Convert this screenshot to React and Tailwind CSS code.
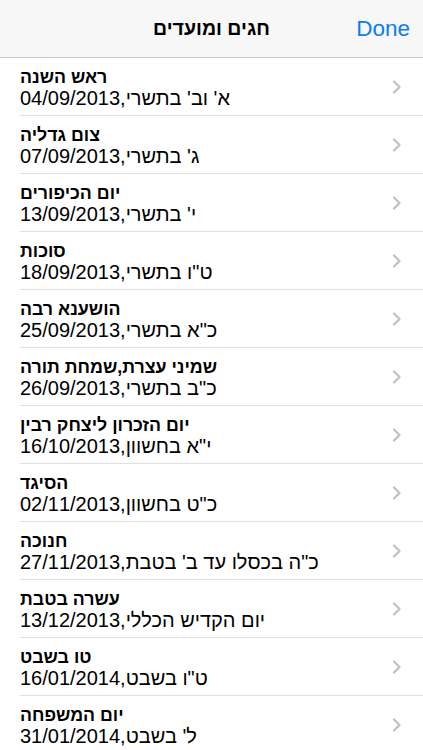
const holidays = [
  { name: "ראש השנה", date: "א' וב' בתשרי,04/09/2013" },
  { name: "צום גדליה", date: "ג' בתשרי,07/09/2013" },
  { name: "יום הכיפורים", date: "י' בתשרי,13/09/2013" },
  { name: "סוכות", date: 'ט"ו בתשרי,18/09/2013' },
  { name: "הושענא רבה", date: 'כ"א בתשרי,25/09/2013' },
  { name: "שמיני עצרת,שמחת תורה", date: 'כ"ב בתשרי,26/09/2013' },
  { name: "יום הזכרון ליצחק רבין", date: 'י"א בחשוון,16/10/2013' },
  { name: "הסיגד", date: 'כ"ט בחשוון,02/11/2013' },
  { name: "חנוכה", date: "כ\"ה בכסלו עד ב' בטבת,27/11/2013" },
  { name: "עשרה בטבת", date: "יום הקדיש הכללי,13/12/2013" },
  { name: "טו בשבט", date: 'ט"ו בשבט,16/01/2014' },
  { name: "יום המשפחה", date: "ל' בשבט,31/01/2014" },
];

function Chevron() {
  return (
    <svg width="10" height="14" viewBox="0 0 10 14" fill="none">
      <path d="M2 1.5 L7.5 7 L2 12.5" stroke="#c2c2c7" strokeWidth="2.3" strokeLinecap="round" strokeLinejoin="round" />
    </svg>
  );
}

function Row({ item }) {
  return (
    <div className="h-[58px] flex items-stretch pl-5">
      <div className="flex-1 flex border-b border-[#e0e0e2] pr-[21px]">
        <div className="flex-1 flex flex-col text-left pt-[9px]">
          <div className="text-[17.8px] leading-[20px] font-bold text-black">
            <span dir="rtl">{item.name}</span>
          </div>
          <div className="text-[20px] leading-[22px] text-black">
            <span dir="rtl">{item.date}</span>
          </div>
        </div>
        <div className="self-center">
          <Chevron />
        </div>
      </div>
    </div>
  );
}

export default function App() {
  return (
    <div className="w-[423px] h-[750px] overflow-hidden bg-white font-['Liberation_Sans',Arial,sans-serif]">
      <div className="h-[58px] bg-[#f7f7f8] border-b border-[#c8c7cc] flex items-center justify-center relative">
        <span dir="rtl" className="text-[19.5px] font-bold text-black">חגים ומועדים</span>
        <span className="absolute right-[13px] text-[22.5px] text-[#0a7cf5]">Done</span>
      </div>
      {holidays.map((h, i) => (
        <Row key={i} item={h} />
      ))}
    </div>
  );
}
